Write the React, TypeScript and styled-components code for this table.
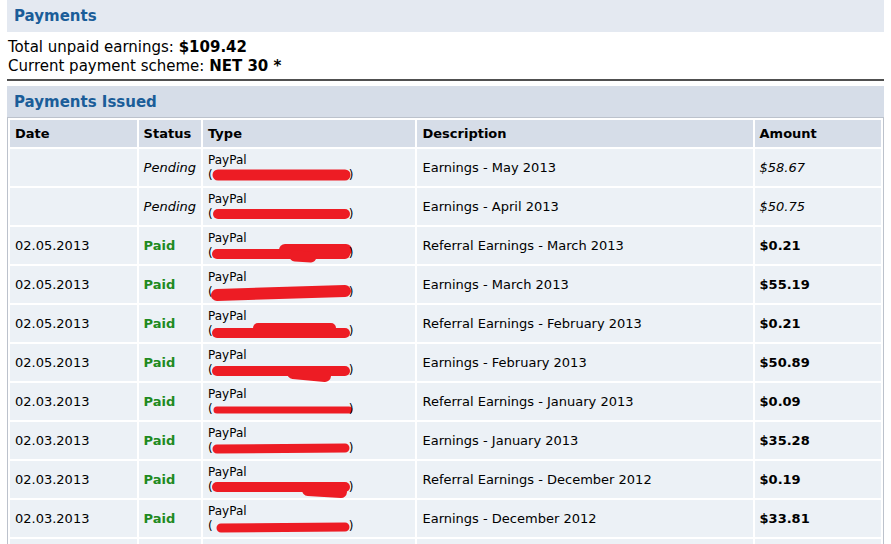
import React from "react";
import styled, { createGlobalStyle } from "styled-components";

const Global = createGlobalStyle`
  html, body { margin: 0; padding: 0; background: #ffffff; }
  body { font-family: "DejaVu Sans", Verdana, sans-serif; color: #000; }
`;

const Page = styled.div`
  padding: 0 7px;
  width: 877px;
`;

const SectionBar = styled.div<{ $tone: "light" | "dark" }>`
  height: ${(p) => (p.$tone === "light" ? 32 : 31)}px;
  display: flex;
  align-items: center;
  padding: 0 7px;
  background: ${(p) => (p.$tone === "light" ? "#e4e9f1" : "#d6dde8")};
  color: #1b5d99;
  font-weight: bold;
  font-size: 15px;
`;

const Summary = styled.div`
  padding: 6px 1px 3px;
  font-size: 15px;
  line-height: 19px;
  border-bottom: 2px solid #505050;
  margin-bottom: 5px;
`;

const Table = styled.table`
  width: 100%;
  border: 1px solid #bcc2cc;
  border-collapse: separate;
  border-spacing: 2px;
  font-size: 13px;
`;

const Th = styled.th<{ $w: number }>`
  width: ${(p) => p.$w}px;
  height: 27px;
  padding: 0 5px;
  text-align: left;
  background: #d6dde8;
  font-weight: bold;
  box-sizing: border-box;
`;

const Td = styled.td`
  height: 37px;
  padding: 0 5px;
  background: #ecf1f6;
  vertical-align: middle;
  white-space: nowrap;
`;

const Status = styled.span<{ $paid: boolean }>`
  color: ${(p) => (p.$paid ? "#1f8a1f" : "#000")};
  font-weight: ${(p) => (p.$paid ? "bold" : "normal")};
  font-style: ${(p) => (p.$paid ? "normal" : "italic")};
`;

const Amount = styled.span<{ $paid: boolean }>`
  font-weight: ${(p) => (p.$paid ? "bold" : "normal")};
  font-style: ${(p) => (p.$paid ? "normal" : "italic")};
`;

const TypeBox = styled.div`
  font-size: 12px;
  line-height: 15px;
`;

const Redaction = styled.svg`
  display: inline-block;
  vertical-align: -2px;
  overflow: visible;
`;

type Stroke = { d: string; w: number };

const redactions: Stroke[][] = [
  [{ d: "M5 6 L132 6", w: 11 }],
  [{ d: "M5 6 L132 6", w: 10 }],
  [{ d: "M4 7 L132 7", w: 10 }, { d: "M72 3 L133 3", w: 12 }, { d: "M82 9 L98 10", w: 11 }],
  [{ d: "M4 9 L132 5", w: 12 }],
  [{ d: "M4 8 L132 8", w: 10 }, { d: "M45 3 L118 3", w: 10 }],
  [{ d: "M4 7 L132 7", w: 10 }, { d: "M80 9 L112 12", w: 12 }],
  [{ d: "M4 7 L136 7", w: 7 }],
  [{ d: "M4 7 L132 6", w: 9 }],
  [{ d: "M4 6 L132 6", w: 10 }, { d: "M95 9 L128 11", w: 12 }],
  [{ d: "M8 8 L132 7", w: 9 }],
];

type Row = { date: string; paid: boolean; desc: string; amount: string };

const rows: Row[] = [
  { date: "", paid: false, desc: "Earnings - May 2013", amount: "$58.67" },
  { date: "", paid: false, desc: "Earnings - April 2013", amount: "$50.75" },
  { date: "02.05.2013", paid: true, desc: "Referral Earnings - March 2013", amount: "$0.21" },
  { date: "02.05.2013", paid: true, desc: "Earnings - March 2013", amount: "$55.19" },
  { date: "02.05.2013", paid: true, desc: "Referral Earnings - February 2013", amount: "$0.21" },
  { date: "02.05.2013", paid: true, desc: "Earnings - February 2013", amount: "$50.89" },
  { date: "02.03.2013", paid: true, desc: "Referral Earnings - January 2013", amount: "$0.09" },
  { date: "02.03.2013", paid: true, desc: "Earnings - January 2013", amount: "$35.28" },
  { date: "02.03.2013", paid: true, desc: "Referral Earnings - December 2012", amount: "$0.19" },
  { date: "02.03.2013", paid: true, desc: "Earnings - December 2012", amount: "$33.81" },
];

const RedactedEmail: React.FC<{ strokes: Stroke[] }> = ({ strokes }) => (
  <span>
    (
    <Redaction width={136} height={12} viewBox="0 0 136 12">
      {strokes.map((s, i) => (
        <path key={i} d={s.d} stroke="#ed1c24" strokeWidth={s.w} strokeLinecap="round" fill="none" />
      ))}
    </Redaction>
    )
  </span>
);

export default function App() {
  return (
    <Page>
      <Global />
      <SectionBar $tone="light">Payments</SectionBar>
      <Summary>
        <div>
          Total unpaid earnings: <b>$109.42</b>
        </div>
        <div>
          Current payment scheme: <b>NET 30 *</b>
        </div>
      </Summary>
      <SectionBar $tone="dark">Payments Issued</SectionBar>
      <Table>
        <thead>
          <tr>
            <Th $w={127}>Date</Th>
            <Th $w={61}>Status</Th>
            <Th $w={213}>Type</Th>
            <Th $w={336}>Description</Th>
            <Th $w={127}>Amount</Th>
          </tr>
        </thead>
        <tbody>
          {rows.map((r, i) => (
            <tr key={i}>
              <Td>{r.date}</Td>
              <Td>
                <Status $paid={r.paid}>{r.paid ? "Paid" : "Pending"}</Status>
              </Td>
              <Td>
                <TypeBox>
                  <div>PayPal</div>
                  <RedactedEmail strokes={redactions[i]} />
                </TypeBox>
              </Td>
              <Td>{r.desc}</Td>
              <Td>
                <Amount $paid={r.paid}>{r.amount}</Amount>
              </Td>
            </tr>
          ))}
          <tr>
            <Td />
            <Td />
            <Td />
            <Td />
            <Td />
          </tr>
        </tbody>
      </Table>
    </Page>
  );
}
